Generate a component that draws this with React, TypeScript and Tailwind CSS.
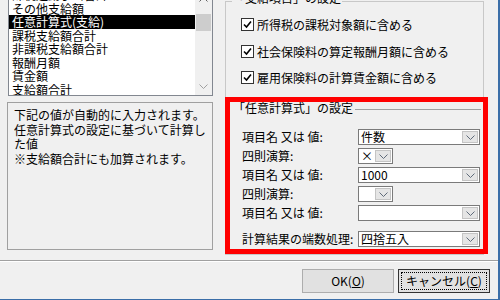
import * as React from 'react';

const itensLista = [
    '課税通勤手当合計',
    'その他支給額',
    '任意計算式(支給)',
    '課税支給額合計',
    '非課税支給額合計',
    '報酬月額',
    '賃金額',
    '支給額合計',
    '控除額合計',
];

const checkItens = [
    '所得税の課税対象額に含める',
    '社会保険料の算定報酬月額に含める',
    '雇用保険料の計算賃金額に含める',
];

const Chevron: React.FC<{ up?: boolean }> = ({ up }) => (
    <svg width="9" height="5" viewBox="0 0 9 5">
        <path
            d={up ? 'M0.5 4.5 L4.5 0.5 L8.5 4.5' : 'M0.5 0.5 L4.5 4.5 L8.5 0.5'}
            fill="none"
            stroke="currentColor"
            strokeWidth="1"
        />
    </svg>
);

const Combo: React.FC<{ valor?: string; pequeno?: boolean }> = ({ valor, pequeno }) => (
    <div className={`${pequeno ? 'w-[35px]' : 'w-[122px]'} h-[16px] flex bg-white border border-[#7a7a7a]`}>
        <div className="flex-1 pl-[2px] text-[12px] leading-[14px] whitespace-nowrap overflow-hidden">{valor}</div>
        <div className="w-[16px] my-px mr-px bg-[#e5e5e5] border border-[#c4c4c4] flex items-center justify-center text-[#5f6b7a]">
            <Chevron />
        </div>
    </div>
);

const Checkbox: React.FC = () => (
    <div className="w-[13px] h-[13px] bg-white border border-[#333] flex items-center justify-center">
        <svg width="9" height="9" viewBox="0 0 9 9">
            <path d="M1 4.5 L3.5 7 L8 1.5" fill="none" stroke="#000" strokeWidth="1.6" />
        </svg>
    </div>
);

const LinhaCampo: React.FC<{ rotulo: string; valor?: string; pequeno?: boolean; mt: string }> = ({ rotulo, valor, pequeno, mt }) => (
    <div className={`flex items-center h-[16px] pl-[12px] ${mt}`}>
        <div className="w-[116px] whitespace-nowrap leading-[16px]">{rotulo}</div>
        <Combo valor={valor} pequeno={pequeno} />
    </div>
);

export default function App() {
    const selecionado = 2;

    return (
        <div className="w-[500px] h-[300px] overflow-hidden bg-[#f0f0f0] border-r-2 border-b border-[#3b6ea8] text-[12px] text-black font-['Noto_Sans_CJK_JP',sans-serif] flex flex-col">
            <div className="h-[260px] flex shrink-0">
                {/* coluna esquerda */}
                <div className="ml-[7px] w-[206px] flex flex-col">
                    <div className="-mt-[10px] ml-px w-[205px] h-[106px] border border-[#828790] bg-white flex overflow-hidden">
                        <div className="flex-1 overflow-hidden">
                            <div className="-mt-[3px]">
                                {itensLista.map((item, i) => (
                                    <div
                                        key={item}
                                        className={`h-[13.5px] leading-[13.5px] pl-[3px] whitespace-nowrap ${i === selecionado ? 'bg-black text-white' : ''}`}
                                    >
                                        {item}
                                    </div>
                                ))}
                            </div>
                        </div>
                        <div className="w-[17px] bg-[#f0f0f0] flex flex-col text-[#606060]">
                            <div className="h-[17px] flex items-center justify-center">
                                <Chevron up />
                            </div>
                            <div className="mt-[6px] mx-px h-[17px] bg-[#cdcdcd]" />
                            <div className="flex-1" />
                            <div className="h-[17px] flex items-center justify-center text-[#a0a0a0]">
                                <Chevron />
                            </div>
                        </div>
                    </div>
                    <div className="mt-[6px] h-[148px] border border-[#a0a0a0] pl-[6px] pt-[5px] leading-[14.5px] whitespace-nowrap">
                        下記の値が自動的に入力されます。
                        <br />
                        任意計算式の設定に基づいて計算し
                        <br />
                        た値
                        <br />
                        ※支給額合計にも加算されます。
                    </div>
                </div>

                {/* grupo de configuração */}
                <div className="ml-[12px] mt-px w-[259px] h-[254px] border border-[#c8c8c8] flex flex-col">
                    <div className="-mt-[10px] ml-[6px] h-[12px] leading-[12px] w-fit px-px bg-[#f0f0f0] whitespace-nowrap">
                        「支給項目」の設定
                    </div>
                    {checkItens.map((texto, i) => (
                        <div
                            key={texto}
                            className={`flex items-center h-[13px] pl-[15px] ${i === 0 ? 'mt-[14px]' : i === 1 ? 'mt-[14px]' : 'mt-[13px]'}`}
                        >
                            <Checkbox />
                            <span className="ml-[3px] whitespace-nowrap leading-[13px]">{texto}</span>
                        </div>
                    ))}

                    <div className="mt-[13px] -ml-px w-[263px] h-[157px] shrink-0 border-[5px] border-[#ff0000] flex flex-col">
                        <div className="flex items-center h-[12px] pl-[3px]">
                            <span className="leading-[12px] whitespace-nowrap">「任意計算式」の設定</span>
                            <div className="flex-1 ml-[2px] mr-[2px] mt-[2px] h-px bg-[#a0a0a0]" />
                        </div>
                        <LinhaCampo rotulo="項目名 又は 値:" valor="件数" mt="mt-[15px]" />
                        <LinhaCampo rotulo="四則演算:" valor="×" pequeno mt="mt-[3px]" />
                        <LinhaCampo rotulo="項目名 又は 値:" valor="1000" mt="mt-[3px]" />
                        <LinhaCampo rotulo="四則演算:" pequeno mt="mt-[3px]" />
                        <LinhaCampo rotulo="項目名 又は 値:" mt="mt-[3px]" />
                        <LinhaCampo rotulo="計算結果の端数処理:" valor="四捨五入" mt="mt-[10px]" />
                    </div>
                </div>
            </div>

            <div className="h-px bg-[#a0a0a0] shrink-0" />
            <div className="h-px bg-white shrink-0" />

            <div className="mt-[7px] flex justify-end gap-[4px] pr-[8px]">
                <button className="w-[92px] h-[24px] bg-[#e1e1e1] border border-[#adadad] leading-[22px]">
                    OK(<span className="underline">O</span>)
                </button>
                <button className="w-[92px] h-[24px] bg-[#e1e1e1] border border-[#333] p-[2px]">
                    <div className="h-full border border-dotted border-black leading-[16px]">
                        キャンセル(<span className="underline">C</span>)
                    </div>
                </button>
            </div>
        </div>
    );
}
